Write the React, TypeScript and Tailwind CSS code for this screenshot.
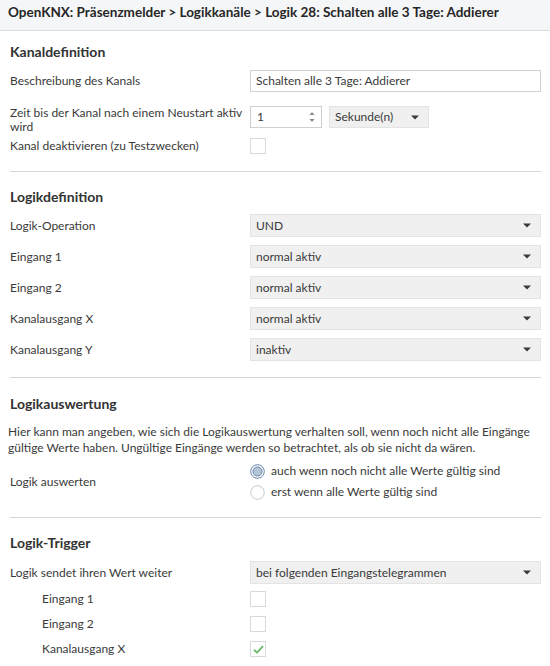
import type { ReactNode } from 'react'

function Caret({ className = '' }: { className?: string }) {
  return (
    <svg width="8" height="5" viewBox="0 0 8 5" className={className}>
      <path d="M0 0.5 L8 0.5 L4 4.5 Z" fill="#3a3a3a" />
    </svg>
  )
}

function Select({ value, className = 'w-[291px]' }: { value: string; className?: string }) {
  return (
    <div
      className={`flex h-[23px] items-center justify-between border border-[#e4e4e4] bg-[#f0f0f0] pl-[5px] pr-[9px] ${className}`}
    >
      <span>{value}</span>
      <Caret />
    </div>
  )
}

function Checkbox({ checked = false }: { checked?: boolean }) {
  return (
    <div className="flex size-[16px] items-center justify-center border border-[#d9d9d9] bg-white">
      {checked && (
        <svg width="11" height="9" viewBox="0 0 11 9">
          <path d="M1 4.8 L4 7.6 L10 1.2" fill="none" stroke="#66b566" strokeWidth="1.8" />
        </svg>
      )}
    </div>
  )
}

function Radio({ checked = false, label }: { checked?: boolean; label: string }) {
  return (
    <div className="flex h-[16px] items-center gap-[6px]">
      <svg width="15" height="15" viewBox="0 0 15 15">
        {checked ? (
          <>
            <circle cx="7.5" cy="7.5" r="6.8" fill="#fff" stroke="#6585a8" strokeWidth="1" />
            <circle cx="7.5" cy="7.5" r="4.6" fill="#b3c5d9" stroke="#4f6f93" strokeWidth="0.8" />
          </>
        ) : (
          <circle cx="7.5" cy="7.5" r="6.8" fill="#fff" stroke="#c9c9c9" strokeWidth="1" />
        )}
      </svg>
      <span>{label}</span>
    </div>
  )
}

function Row({ label, children, className = '', indent = false }: { label: ReactNode; children: ReactNode; className?: string; indent?: boolean }) {
  return (
    <div className={`flex items-center ${className}`}>
      <div className={`w-[240px] shrink-0 ${indent ? 'pl-[32px]' : ''}`}>{label}</div>
      {children}
    </div>
  )
}

function Heading({ children, className = '' }: { children: ReactNode; className?: string }) {
  return <div className={`h-[20px] text-[14px] font-bold leading-[20px] text-[#333] ${className}`}>{children}</div>
}

function Separator({ className = '' }: { className?: string }) {
  return <div className={`h-px bg-[#d6d6d6] ${className}`} />
}

export default function App() {
  return (
    <div className="h-[666px] w-[550px] overflow-hidden bg-white font-['Lato',sans-serif] text-[12px] text-[#3a3a3a]">
      <div className="flex h-[31px] items-center border-b border-[#dcdcdc] bg-[#f5f6f7] pb-[5px] pl-[8px] text-[13.5px] font-bold text-[#262626]">
        OpenKNX: Präsenzmelder &gt; Logikkanäle &gt; Logik 28: Schalten alle 3 Tage: Addierer
      </div>

      <div className="pl-[10px] pr-[9px]">
        {/* Kanaldefinition */}
        <Heading className="mt-[11px]">Kanaldefinition</Heading>
        <Row label="Beschreibung des Kanals" className="mt-[8px] h-[22px]">
          <div className="flex h-[22px] w-[291px] items-center border border-[#d2d2d2] px-[5px]">
            Schalten alle 3 Tage: Addierer
          </div>
        </Row>
        <div className="mt-[14px] flex h-[28px] items-start">
          <div className="w-[240px] shrink-0 leading-[14px]">
            Zeit bis der Kanal nach einem Neustart aktiv wird
          </div>
          <div className="flex gap-[7px]">
            <div className="flex h-[22px] w-[72px] items-center justify-between border border-[#cfcfcf] pl-[6px] pr-[6px]">
              <span>1</span>
              <svg width="6" height="12" viewBox="0 0 6 12">
                <path d="M0.5 4 L5.5 4 L3 1 Z" fill="#8a8a8a" />
                <path d="M0.5 8 L5.5 8 L3 11 Z" fill="#8a8a8a" />
              </svg>
            </div>
            <Select value="Sekunde(n)" className="w-[100px] !h-[22px]" />
          </div>
        </div>
        <Row label="Kanal deaktivieren (zu Testzwecken)" className="mt-[4px] h-[16px]">
          <Checkbox />
        </Row>
        <Separator className="mt-[17px]" />

        {/* Logikdefinition */}
        <Heading className="mt-[15px]">Logikdefinition</Heading>
        <div className="mt-[7px] flex flex-col gap-[8px]">
          <Row label="Logik-Operation"><Select value="UND" /></Row>
          <Row label="Eingang 1"><Select value="normal aktiv" /></Row>
          <Row label="Eingang 2"><Select value="normal aktiv" /></Row>
          <Row label="Kanalausgang X"><Select value="normal aktiv" /></Row>
          <Row label="Kanalausgang Y"><Select value="inaktiv" /></Row>
        </div>
        <Separator className="mt-[16px]" />

        {/* Logikauswertung */}
        <Heading className="mt-[16px]">Logikauswertung</Heading>
        <p className="-ml-[2px] mt-[10px] leading-[16px]">
          Hier kann man angeben, wie sich die Logikauswertung verhalten soll, wenn noch nicht alle Eingänge gültige Werte haben. Ungültige Eingänge werden so betrachtet, als ob sie nicht da wären.
        </p>
        <Row label="Logik auswerten" className="mt-[7px]">
          <div className="flex flex-col gap-[5px]">
            <Radio checked label="auch wenn noch nicht alle Werte gültig sind" />
            <Radio label="erst wenn alle Werte gültig sind" />
          </div>
        </Row>
        <Separator className="mt-[17px]" />

        {/* Logik-Trigger */}
        <Heading className="mt-[15px]">Logik-Trigger</Heading>
        <Row label="Logik sendet ihren Wert weiter" className="mt-[8px]">
          <Select value="bei folgenden Eingangstelegrammen" />
        </Row>
        <div className="mt-[7px] flex flex-col gap-[9px]">
          <Row indent label="Eingang 1" className="h-[16px]"><Checkbox /></Row>
          <Row indent label="Eingang 2" className="h-[16px]"><Checkbox /></Row>
          <Row indent label="Kanalausgang X" className="h-[16px]"><Checkbox checked /></Row>
        </div>
      </div>
    </div>
  )
}
